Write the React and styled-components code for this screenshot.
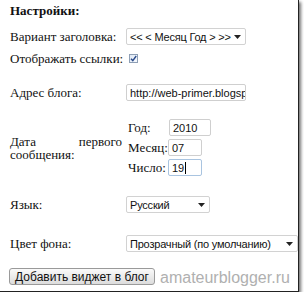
import React from 'react';
import styled, { createGlobalStyle } from 'styled-components';

const GlobalStyle = createGlobalStyle`
    html, body {
        margin: 0;
        padding: 0;
        background: #ffffff;
    }
`

const Arrow = () => (
    <svg width="7" height="4" viewBox="0 0 7 4">
        <path d="M0 0 L7 0 L3.5 4 Z" fill="#222" />
    </svg>
)

const CheckMark = () => (
    <svg width="7" height="7" viewBox="0 0 7 7">
        <path d="M1 3.8 L2.8 5.6 L6.2 1" stroke="#2a4a8a" strokeWidth="1.4" fill="none" />
    </svg>
)

const App = () => {
    return (
        <>
            <GlobalStyle />
            <Frame>
                <Title>Настройки:</Title>
                <Form>
                    <Row $top={13}>
                        <Label>Вариант заголовка:</Label>
                        <SelectBox $width={120}>
                            <span>&lt;&lt; &lt; Месяц Год &gt; &gt;&gt;</span>
                            <Arrow />
                        </SelectBox>
                    </Row>
                    <Row $top={5}>
                        <Label>Отображать ссылки:</Label>
                        <CheckBox><CheckMark /></CheckBox>
                    </Row>
                    <Row $top={17}>
                        <Label>Адрес блога:</Label>
                        <TextInput $width={120}>http://web-primer.blogsp</TextInput>
                    </Row>
                    <Row $top={18}>
                        <Label $justify>Дата первого сообщения:</Label>
                        <DateFields>
                            <DateLine>
                                <DateLabel $width={41}>Год:</DateLabel>
                                <TextInput $width={42}>2010</TextInput>
                            </DateLine>
                            <DateLine>
                                <DateLabel $width={40}>Месяц:</DateLabel>
                                <TextInput $width={34}>07</TextInput>
                            </DateLine>
                            <DateLine>
                                <DateLabel $width={40}>Число:</DateLabel>
                                <TextInput $width={34} $focused>19<Caret /></TextInput>
                            </DateLine>
                        </DateFields>
                    </Row>
                    <Row $top={20}>
                        <Label>Язык:</Label>
                        <SelectBox $width={84}>
                            <span>Русский</span>
                            <Arrow />
                        </SelectBox>
                    </Row>
                    <Row $top={22}>
                        <Label>Цвет фона:</Label>
                        <SelectBox $width={172}>
                            <span>Прозрачный (по умолчанию)</span>
                            <Arrow />
                        </SelectBox>
                    </Row>
                </Form>
                <Footer>
                    <Button>Добавить виджет в блог</Button>
                    <Watermark>amateurblogger.ru</Watermark>
                </Footer>
            </Frame>
        </>
    )
}

export default App;


const Frame = styled.div`
    width: 299px;
    height: 292px;
    box-sizing: border-box;
    background: #ffffff;
    border-right: 1px solid #222;
    border-bottom: 1px solid #222;
    box-shadow: 2px 2px 3px rgba(0, 0, 0, .55);
    padding: 6px 0 0 10px;
    font-family: "Liberation Serif", "Times New Roman", serif;
    color: #111;
    overflow: hidden;
`

const Title = styled.h3`
    margin: 0;
    font-size: 13px;
    font-weight: bold;
    line-height: 9px;
    height: 9px;
`

const Form = styled.div`
    display: flex;
    flex-direction: column;
`

const Row = styled.div`
    display: grid;
    grid-template-columns: 116px auto;
    align-items: center;
    margin-top: ${({$top}) => $top}px;
    min-height: 17px;
`

const Label = styled.div`
    font-size: 13px;
    line-height: 13px;
    width: ${({$justify}) => $justify ? '112px' : 'auto'};
    text-align: ${({$justify}) => $justify ? 'justify' : 'left'};
    text-align-last: left;
`

const SelectBox = styled.div`
    width: ${({$width}) => $width}px;
    height: 17px;
    box-sizing: border-box;
    border: 1px solid #d2d2d2;
    border-radius: 2px;
    background: #fff;
    display: flex;
    align-items: center;
    justify-content: space-between;
    padding: 0 4px 0 3px;
    font-family: "Liberation Sans", Arial, sans-serif;
    font-size: 11px;
    letter-spacing: -0.2px;
    color: #111;
    white-space: nowrap;
    overflow: hidden;
`

const TextInput = styled.div`
    width: ${({$width}) => $width}px;
    height: 17px;
    box-sizing: border-box;
    border: 1px solid ${({$focused}) => $focused ? '#a9c4e0' : '#cfcfcf'};
    border-radius: 2px;
    background: #fff;
    display: flex;
    align-items: center;
    padding: 0 2px 0 3px;
    font-family: "Liberation Sans", Arial, sans-serif;
    font-size: 11px;
    color: #111;
    white-space: nowrap;
    overflow: hidden;
`

const Caret = styled.span`
    display: inline-block;
    width: 1px;
    height: 12px;
    background: #000;
    margin-left: 1px;
`

const CheckBox = styled.span`
    width: 9px;
    height: 9px;
    margin-left: 3px;
    box-sizing: border-box;
    border: 1px solid #8e9fb5;
    background: linear-gradient(135deg, #dfe8f3, #f7faff);
    display: flex;
    align-items: center;
    justify-content: center;
`

const DateFields = styled.div`
    display: flex;
    flex-direction: column;
    gap: 3px;
    padding-left: 2px;
`

const DateLine = styled.div`
    display: flex;
    align-items: center;
`

const DateLabel = styled.span`
    width: ${({$width}) => $width}px;
    font-size: 13px;
`

const Footer = styled.div`
    display: flex;
    align-items: flex-start;
    margin-top: 16px;
    gap: 5px;
`

const Button = styled.button`
    width: 146px;
    height: 17px;
    box-sizing: border-box;
    border: 1px solid #9a9a9a;
    border-radius: 3px;
    background: linear-gradient(#fafafa, #dcdcdc);
    font-family: "Liberation Sans", Arial, sans-serif;
    font-size: 12px;
    color: #111;
    padding: 0;
    margin-left: -1px;
`

const Watermark = styled.span`
    font-family: "Liberation Sans", Arial, sans-serif;
    font-size: 16px;
    line-height: 18px;
    margin-top: 1px;
    color: #b0b0b0;
    white-space: nowrap;
`
